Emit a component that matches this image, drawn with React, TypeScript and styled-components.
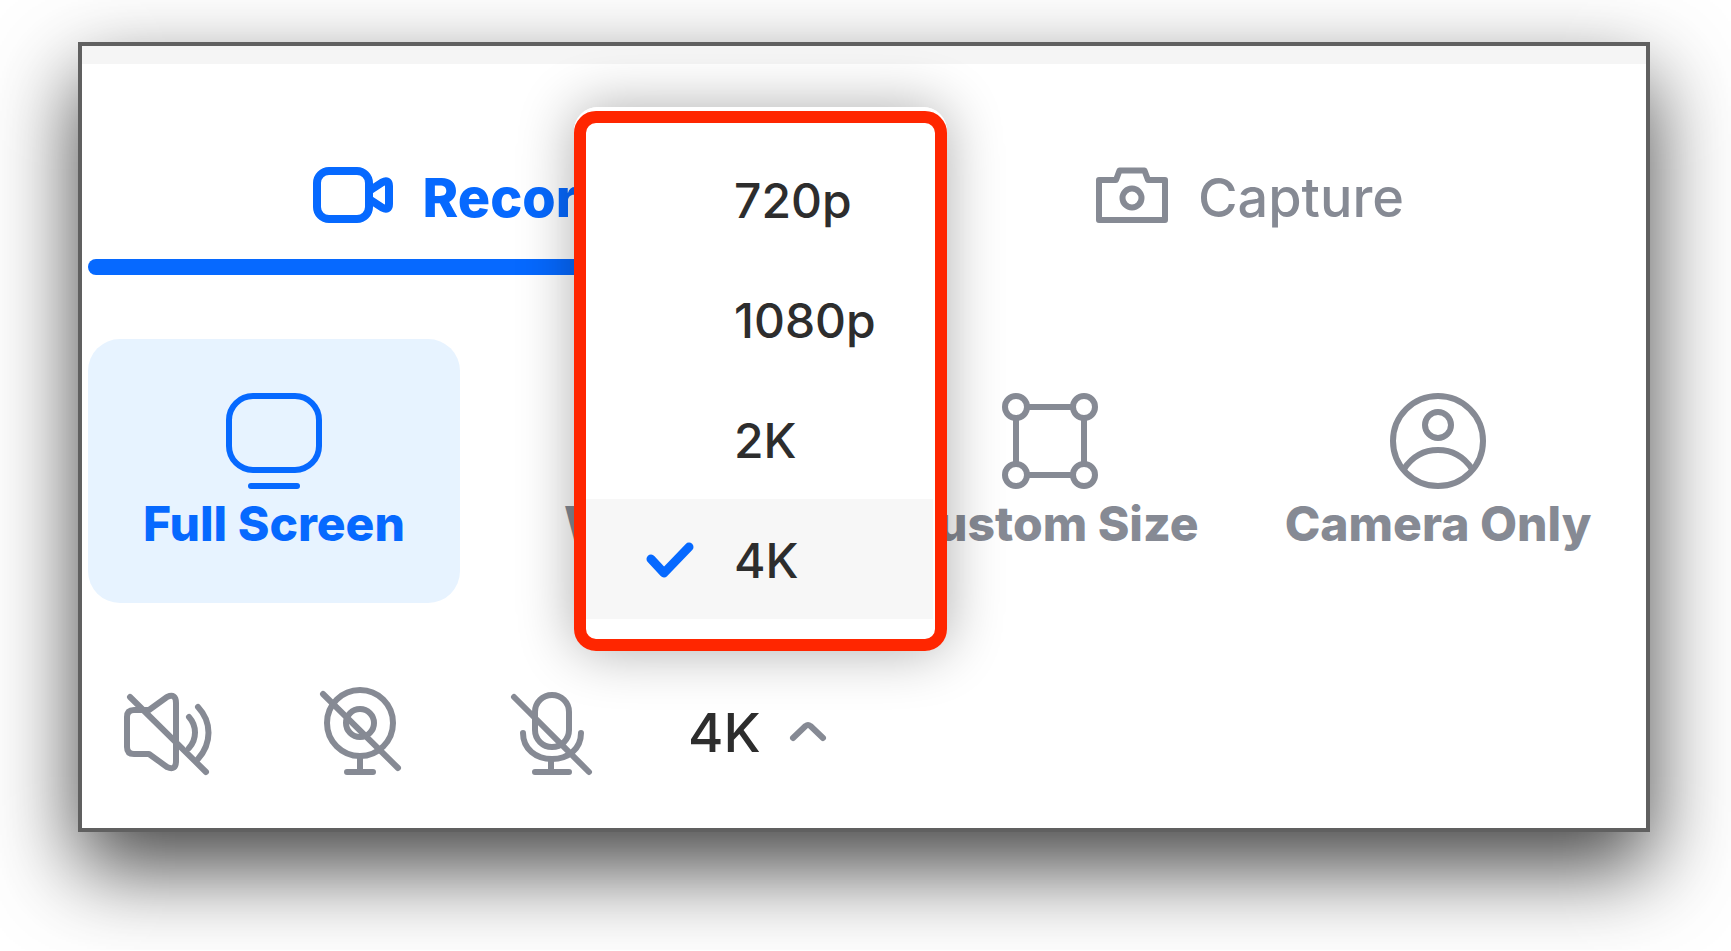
import React, { useState } from "react";
import styled, { createGlobalStyle, css } from "styled-components";

const color = {
  blue: "#0669ff",
  grey: "#868a94",
  ink: "#2d2d2d",
  tint: "#e7f3ff",
  hover: "#f7f7f7",
  alert: "#ff2600",
};

const GlobalStyle = createGlobalStyle`
  *, *::before, *::after { box-sizing: border-box; }
  body {
    margin: 0;
    background: #fff;
    font-family: Inter, "Liberation Sans", sans-serif;
  }
  button, select, input { font: inherit; }
`;

const Page = styled.div`
  padding: 42px 81px 118px 78px;
  overflow: hidden;
`;

const Panel = styled.main`
  background: #fff;
  border: 4px solid #606060;
  box-shadow: 0 36px 80px rgba(0, 0, 0, 0.73);
`;

const TitleStrip = styled.div`
  height: 18px;
  background: #f5f5f5;
`;

const Content = styled.div`
  padding: 0 22px 48px 6px;
`;

const Tabs = styled.div`
  display: grid;
  grid-template-columns: 1fr 1fr;
  gap: 40px;
`;

const Tab = styled.button<{ $active?: boolean }>`
  display: flex;
  justify-content: center;
  gap: 30px;
  padding: 102px 0 29px;
  border: 0;
  background: none;
  color: ${(p) => (p.$active ? color.blue : color.grey)};
  font-size: 54px;
  font-weight: ${(p) => (p.$active ? 800 : 500)};
  line-height: 64px;
  position: relative;
  margin-bottom: 16px;
  ${(p) =>
    p.$active &&
    css`
      &::after {
        content: "";
        position: absolute;
        left: 0;
        right: 0;
        top: 100%;
        height: 16px;
        border-radius: 8px;
        background: ${color.blue};
      }
    `}
`;

const Modes = styled.div`
  display: grid;
  grid-template-columns: repeat(4, 1fr);
  gap: 16px;
  margin-top: 64px;
`;

const Mode = styled.button<{ $active?: boolean }>`
  display: flex;
  flex-direction: column;
  align-items: center;
  gap: 5px;
  padding: 54px 0 49px;
  border: 0;
  border-radius: 32px;
  background: ${(p) => (p.$active ? color.tint : "transparent")};
  color: ${(p) => (p.$active ? color.blue : color.grey)};
  font-size: 48px;
  font-weight: 800;
  line-height: 60px;
  white-space: nowrap;
`;

const Toolbar = styled.div`
  display: flex;
  align-items: center;
  gap: 96px;
  margin-top: 81px;
  padding-left: 32px;
`;

const Toggle = styled.button`
  display: flex;
  padding: 0;
  border: 0;
  background: none;
  color: ${color.grey};
`;

const Quality = styled.div`
  position: relative;
  display: flex;
  align-items: center;
  height: 96px;
  margin-left: -8px;
`;

const QualitySelect = styled.select`
  appearance: none;
  width: 139px;
  padding: 2px 0 0;
  border: 0;
  background: none;
  color: ${color.ink};
  font-size: 54px;
  font-weight: 500;
  line-height: 64px;
`;

const Chevron = styled.svg`
  position: absolute;
  right: 0;
  color: ${color.grey};
  pointer-events: none;
`;

const Menu = styled.fieldset`
  position: absolute;
  left: -114px;
  bottom: calc(100% + 33px);
  width: 373px;
  margin: 0;
  padding: 32px 14px 32px 12px;
  border: 0;
  border-radius: 24px;
  background: #fff;
  box-shadow: 0 0 56px rgba(0, 0, 0, 0.32);
  &::after {
    content: "";
    position: absolute;
    inset: 4px 0 0;
    border: 12px solid ${color.alert};
    border-radius: 22px;
    pointer-events: none;
  }
`;

const Option = styled.label<{ $active: boolean }>`
  display: grid;
  grid-template-columns: 48px 1fr;
  gap: 40px;
  align-items: center;
  height: 120px;
  padding: 4px 0 0 60px;
  background: ${(p) => (p.$active ? color.hover : "transparent")};
  color: ${color.ink};
  font-size: 48px;
  font-weight: 500;
  line-height: 60px;
`;

const Radio = styled.input`
  appearance: none;
  position: absolute;
  margin: 0;
`;

const Mark = styled.span`
  display: flex;
  color: ${color.blue};
`;

type IconProps = { w: number; h: number; stroke: number; children: React.ReactNode };

const Icon = ({ w, h, stroke, children }: IconProps) => (
  <svg
    width={w}
    height={h}
    viewBox={`0 0 ${w} ${h}`}
    fill="none"
    stroke="currentColor"
    strokeWidth={stroke}
    strokeLinecap="round"
    strokeLinejoin="round"
    aria-hidden="true"
  >
    {children}
  </svg>
);

const RecordIcon = () => (
  <Icon w={80} h={64} stroke={8}>
    <rect x="4" y="5" width="52" height="48" rx="12" />
    <path d="M56 25 L69 16.500 Q76 13 76 20 V38 Q76 45 69 41.500 L56 33 V25Z" />
  </Icon>
);

const CaptureIcon = () => (
  <Icon w={72} h={64} stroke={6}>
    <path d="M3 14 H20 L23.500 4.500 H48.500 L52 14 H69 V54 H3Z" />
    <circle cx="36" cy="32" r="9.500" />
  </Icon>
);

const ScreenIcon = () => (
  <Icon w={96} h={96} stroke={6}>
    <rect x="3" y="3" width="90" height="74" rx="24" />
    <path d="M25 93 H71" />
  </Icon>
);

const WindowIcon = () => (
  <Icon w={96} h={96} stroke={6}>
    <rect x="3" y="9" width="90" height="78" rx="14" />
    <path d="M3 32 H93" />
  </Icon>
);

const CustomIcon = () => (
  <Icon w={96} h={96} stroke={6}>
    <path d="M25 14 H71 M25 82 H71 M14 25 V71 M82 25 V71" />
    <circle cx="14" cy="14" r="11" />
    <circle cx="82" cy="14" r="11" />
    <circle cx="14" cy="82" r="11" />
    <circle cx="82" cy="82" r="11" />
  </Icon>
);

const CameraIcon = () => (
  <Icon w={96} h={96} stroke={6}>
    <circle cx="48" cy="48" r="45" />
    <circle cx="48" cy="32" r="13" />
    <path d="M14 76 C22 64 34 57 48 57 S74 64 82 76" />
  </Icon>
);

const SpeakerOffIcon = () => (
  <Icon w={96} h={96} stroke={6}>
    <path d="M29 26 H14 Q7 26 7 33 V63 Q7 70 14 70 H29 L47 83 Q56 87 56 77 V19 Q56 9 47 13Z" />
    <path d="M69 33 C77 42 77 55 69 64 M78 23 C92 38 92 59 78 75" />
    <path d="M10 13 L86 88" />
  </Icon>
);

const WebcamOffIcon = () => (
  <Icon w={96} h={96} stroke={6}>
    <circle cx="48" cy="39" r="33" />
    <circle cx="48" cy="39" r="14" />
    <path d="M48 72 V88 M35 88 H61" />
    <path d="M11 10 L86 84" />
  </Icon>
);

const MicOffIcon = () => (
  <Icon w={96} h={96} stroke={6}>
    <rect x="31" y="11" width="34" height="52" rx="17" />
    <path d="M19 49 C19 65 32 75 48 75 S77 65 77 49" />
    <path d="M47 75 V88 M31 88 H65" />
    <path d="M10 13 L85 88" />
  </Icon>
);

const CheckIcon = () => (
  <Icon w={48} h={38} stroke={9}>
    <path d="M5 17 L18 31 L43 5" />
  </Icon>
);

const modes = [
  { label: "Full Screen", icon: <ScreenIcon /> },
  { label: "Window", icon: <WindowIcon /> },
  { label: "Custom Size", icon: <CustomIcon /> },
  { label: "Camera Only", icon: <CameraIcon /> },
];

const qualities = ["720p", "1080p", "2K", "4K"];

export default function App() {
  const [tab, setTab] = useState("Record");
  const [mode, setMode] = useState("Full Screen");
  const [quality, setQuality] = useState("4K");

  return (
    <Page>
      <GlobalStyle />
      <Panel>
        <TitleStrip />
        <Content>
          <Tabs role="tablist">
            <Tab
              role="tab"
              aria-selected={tab === "Record"}
              $active={tab === "Record"}
              onClick={() => setTab("Record")}
            >
              <RecordIcon />
              Record
            </Tab>
            <Tab
              role="tab"
              aria-selected={tab === "Capture"}
              $active={tab === "Capture"}
              onClick={() => setTab("Capture")}
            >
              <CaptureIcon />
              Capture
            </Tab>
          </Tabs>
          <Modes>
            {modes.map((m) => (
              <Mode
                key={m.label}
                aria-pressed={mode === m.label}
                $active={mode === m.label}
                onClick={() => setMode(m.label)}
              >
                {m.icon}
                {m.label}
              </Mode>
            ))}
          </Modes>
          <Toolbar>
            <Toggle aria-label="System sound off">
              <SpeakerOffIcon />
            </Toggle>
            <Toggle aria-label="Webcam off">
              <WebcamOffIcon />
            </Toggle>
            <Toggle aria-label="Microphone off">
              <MicOffIcon />
            </Toggle>
            <Quality>
              <QualitySelect
                aria-label="Video quality"
                value={quality}
                onChange={(e) => setQuality(e.target.value)}
              >
                {qualities.map((q) => (
                  <option key={q}>{q}</option>
                ))}
              </QualitySelect>
              <Chevron
                width="38"
                height="22"
                viewBox="0 0 38 22"
                fill="none"
                stroke="currentColor"
                strokeWidth="6"
                strokeLinecap="round"
                strokeLinejoin="round"
                aria-hidden="true"
              >
                <path d="M4 17 L16.500 5 Q19 3 21.500 5 L34 17" />
              </Chevron>
              <Menu aria-label="Video quality options">
                {qualities.map((q) => (
                  <Option key={q} $active={quality === q}>
                    <Mark>
                      <Radio
                        type="radio"
                        name="quality"
                        checked={quality === q}
                        onChange={() => setQuality(q)}
                      />
                      {quality === q && <CheckIcon />}
                    </Mark>
                    {q}
                  </Option>
                ))}
              </Menu>
            </Quality>
          </Toolbar>
        </Content>
      </Panel>
    </Page>
  );
}
